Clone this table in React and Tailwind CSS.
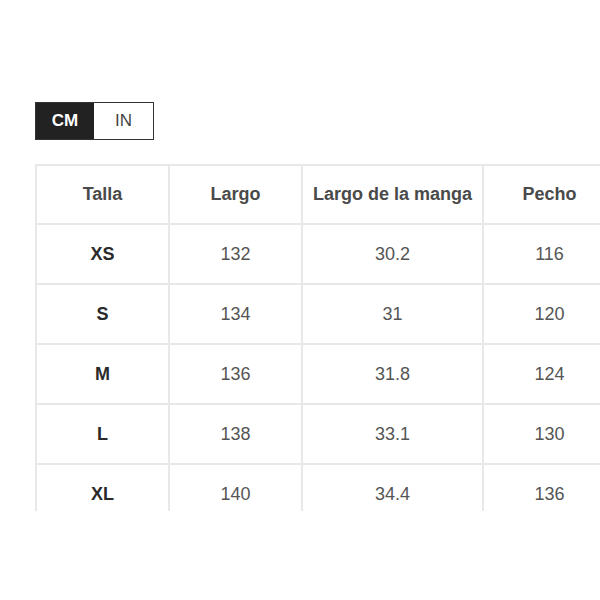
const headers = ["Talla", "Largo", "Largo de la manga", "Pecho"];

const rows = [
  ["XS", "132", "30.2", "116"],
  ["S", "134", "31", "120"],
  ["M", "136", "31.8", "124"],
  ["L", "138", "33.1", "130"],
  ["XL", "140", "34.4", "136"],
];

const widths = ["w-[133px]", "w-[133px]", "w-[181px]", "w-[133px]"];

export default function App() {
  return (
    <div className="w-[600px] h-[600px] bg-white overflow-hidden pl-[35px] pt-[102px] font-['Liberation_Sans',Arial,sans-serif]">
      <div className="flex w-[119px] h-[38px] border border-[#333]">
        <button className="w-[58px] bg-[#222] text-white text-[17px] font-bold">CM</button>
        <button className="flex-1 bg-white text-[#444] text-[17px]">IN</button>
      </div>

      <div className="mt-[24px] h-[347px] w-[600px] overflow-hidden">
        <table className="border-collapse table-fixed w-[580px] border-2 border-[#e8e8e8]">
          <thead>
            <tr className="h-[59px]">
              {headers.map((h, i) => (
                <th
                  key={h}
                  className={`${widths[i]} border-2 border-[#e8e8e8] text-[18px] font-bold text-[#4a4a4a] text-center whitespace-nowrap px-0`}
                >
                  {h}
                </th>
              ))}
            </tr>
          </thead>
          <tbody>
            {rows.map((r) => (
              <tr key={r[0]} className="h-[60px]">
                {r.map((c, i) => (
                  <td
                    key={i}
                    className={`border-2 border-[#e8e8e8] text-center text-[18px] ${
                      i === 0 ? "font-bold text-[#2a2a2a]" : "text-[#555]"
                    }`}
                  >
                    {c}
                  </td>
                ))}
              </tr>
            ))}
          </tbody>
        </table>
      </div>
    </div>
  );
}
